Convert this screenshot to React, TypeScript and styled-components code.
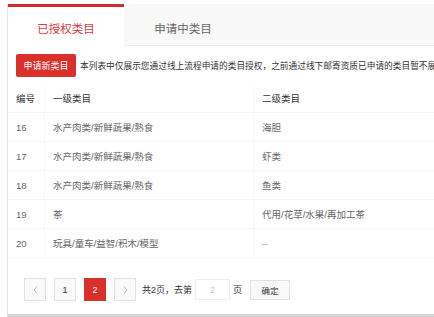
import React from 'react';
import styled, { createGlobalStyle } from 'styled-components';

const GlobalStyle = createGlobalStyle`
  html, body {
    margin: 0;
    padding: 0;
    background: #fff;
    overflow: hidden;
  }
  body {
    font-family: "Liberation Sans", "Noto Sans CJK SC", sans-serif;
  }
`;

const Page = styled.div`
  padding: 4px 0 0 7px;
`;

const Panel = styled.div`
  width: 640px;
  border-left: 1px solid #e6e6e6;
  border-bottom: 4px solid #d6d6d6;
  background: #fff;
`;

const TabBar = styled.div`
  display: flex;
  height: 41px;
  background: #f8f8f8;
  border-bottom: 1px solid #ececec;
`;

const Tab = styled.div<{ $active?: boolean }>`
  width: ${p => (p.$active ? '116px' : '118px')};
  display: flex;
  align-items: center;
  justify-content: center;
  box-sizing: border-box;
  padding-top: 3px;
  border-top: 3px solid ${p => (p.$active ? '#d7282e' : 'transparent')};
  margin-bottom: -1px;
  background: ${p => (p.$active ? '#fff' : 'transparent')};
  color: ${p => (p.$active ? '#d73a3f' : '#666')};
  font-size: 11.5px;
`;

const Toolbar = styled.div`
  display: flex;
  align-items: center;
  gap: 4px;
  padding: 8px 8px 7px;
`;

const RedButton = styled.div`
  width: 60px;
  height: 23px;
  display: flex;
  align-items: center;
  justify-content: center;
  background: #d9302c;
  border-radius: 2px;
  color: #fff;
  font-size: 9px;
  flex-shrink: 0;
`;

const Notice = styled.span`
  font-size: 8.7px;
  color: #333;
  white-space: nowrap;
`;

const Row = styled.div<{ $head?: boolean }>`
  display: grid;
  grid-template-columns: 37px 209px 1fr;
  height: 29px;
  border-bottom: 1px solid #f6f6f6;
  box-sizing: border-box;
  color: ${p => (p.$head ? '#333' : '#666')};
  font-size: 9.5px;
`;

const Cell = styled.div<{ $muted?: boolean }>`
  display: flex;
  align-items: center;
  padding-left: 8px;
  border-right: 1px solid #f8f8f8;
  color: ${p => (p.$muted ? '#aaa' : 'inherit')};
`;

const Pager = styled.div`
  display: flex;
  align-items: center;
  padding: 20px 16px 13px;
  font-size: 9px;
  color: #333;
`;

const PageBox = styled.div<{ $active?: boolean }>`
  width: 22px;
  height: 23px;
  box-sizing: border-box;
  display: flex;
  align-items: center;
  justify-content: center;
  margin-right: 8px;
  border: 1px solid ${p => (p.$active ? '#d9302c' : '#e2e2e2')};
  background: ${p => (p.$active ? '#d9302c' : '#fafafa')};
  color: ${p => (p.$active ? '#fff' : '#333')};
  font-size: 9px;
`;

const Label = styled.span`
  margin-left: -2px;
`;

const PageInput = styled.div`
  width: 35px;
  height: 21px;
  box-sizing: border-box;
  margin: 0 3px 0 3px;
  border: 1px solid #eee;
  display: flex;
  align-items: center;
  justify-content: center;
  color: #ccc;
`;

const GoButton = styled.div`
  width: 40px;
  height: 20px;
  box-sizing: border-box;
  margin-left: 8px;
  border: 1px solid #e2e2e2;
  background: #f9f9f9;
  display: flex;
  align-items: center;
  justify-content: center;
  font-size: 8.5px;
`;

const Chevron = ({ dir }: { dir: 'l' | 'r' }) => (
  <svg width="5" height="8" viewBox="0 0 5 8">
    <polyline
      points={dir === 'l' ? '4,0.5 1,4 4,7.5' : '1,0.5 4,4 1,7.5'}
      fill="none"
      stroke="#bbb"
      strokeWidth="1"
    />
  </svg>
);

const rows = [
  ['16', '水产肉类/新鲜蔬果/熟食', '海胆'],
  ['17', '水产肉类/新鲜蔬果/熟食', '虾类'],
  ['18', '水产肉类/新鲜蔬果/熟食', '鱼类'],
  ['19', '茶', '代用/花草/水果/再加工茶'],
  ['20', '玩具/童车/益智/积木/模型', '--'],
];

export default function App() {
  return (
    <Page>
      <GlobalStyle />
      <Panel>
        <TabBar>
          <Tab $active>已授权类目</Tab>
          <Tab>申请中类目</Tab>
        </TabBar>
        <Toolbar>
          <RedButton>申请新类目</RedButton>
          <Notice>本列表中仅展示您通过线上流程申请的类目授权，之前通过线下邮寄资质已申请的类目暂不展示，如有疑问请联系客服</Notice>
        </Toolbar>
        <Row $head>
          <Cell>编号</Cell>
          <Cell>一级类目</Cell>
          <Cell>二级类目</Cell>
        </Row>
        {rows.map(r => (
          <Row key={r[0]}>
            <Cell>{r[0]}</Cell>
            <Cell>{r[1]}</Cell>
            <Cell $muted={r[2] === '--'}>{r[2]}</Cell>
          </Row>
        ))}
        <Pager>
          <PageBox><Chevron dir="l" /></PageBox>
          <PageBox>1</PageBox>
          <PageBox $active>2</PageBox>
          <PageBox><Chevron dir="r" /></PageBox>
          <Label>共2页，去第</Label>
          <PageInput>2</PageInput>
          <span>页</span>
          <GoButton>确定</GoButton>
        </Pager>
      </Panel>
    </Page>
  );
}
